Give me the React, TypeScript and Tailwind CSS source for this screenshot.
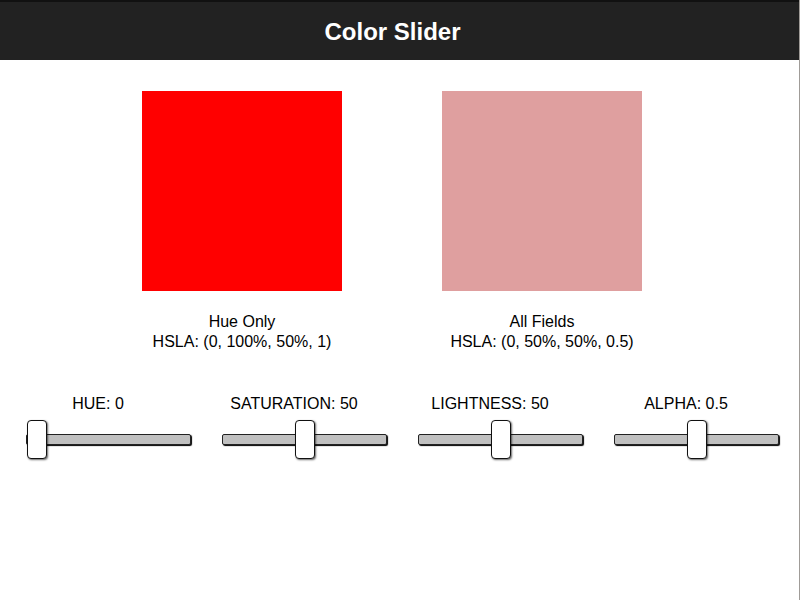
import { useState } from 'react';

type Field = { key: 'h' | 's' | 'l' | 'a'; label: string; max: number };

const fields: Field[] = [
  { key: 'h', label: 'HUE', max: 360 },
  { key: 's', label: 'SATURATION', max: 100 },
  { key: 'l', label: 'LIGHTNESS', max: 100 },
  { key: 'a', label: 'ALPHA', max: 1 },
];

const Slider = ({ value, max }: { value: number; max: number }) => {
  const left = 1 + (value / max) * 144;
  return (
    <div className="relative ml-[26px] w-[165px] h-[40px] pt-[14px]">
      <div className="h-[11px] bg-[#c0c0c0] border border-[#222] rounded-[2px] shadow-[1px_1px_1px_#000]" />
      <div
        className="absolute top-0 w-[20px] h-[39px] bg-white border border-[#111] rounded-[4px] shadow-[1px_1px_2px_rgba(0,0,0,0.6)]"
        style={{ left }}
      />
    </div>
  );
};

const App = () => {
  const [color] = useState({ h: 0, s: 50, l: 50, a: 0.5 });

  return (
    <div className="min-h-screen bg-white border-r border-[#a09c98] font-['Liberation_Sans',Arial,sans-serif] text-black">
      <div className="h-[60px] bg-[#222] border-t-2 border-[#111] flex items-center justify-center pr-[14px] pt-[2px]">
        <h1 className="text-white text-[24px] font-bold">Color Slider</h1>
      </div>

      <div className="w-[784px]">
        <div className="flex justify-center gap-[100px] pt-[31px]">
          <div className="w-[200px] flex flex-col items-center">
            <div className="w-[200px] h-[200px]" style={{ backgroundColor: `hsla(${color.h}, 100%, 50%, 1)` }} />
            <div className="mt-[21px] text-[16px] leading-[20px] text-center whitespace-nowrap">
              <div>Hue Only</div>
              <div>HSLA: ({color.h}, 100%, 50%, 1)</div>
            </div>
          </div>
          <div className="w-[200px] flex flex-col items-center">
            <div
              className="w-[200px] h-[200px]"
              style={{ backgroundColor: `hsla(${color.h}, ${color.s}%, ${color.l}%, ${color.a})` }}
            />
            <div className="mt-[21px] text-[16px] leading-[20px] text-center whitespace-nowrap">
              <div>All Fields</div>
              <div>
                HSLA: ({color.h}, {color.s}%, {color.l}%, {color.a})
              </div>
            </div>
          </div>
        </div>

        <div className="grid grid-cols-4 mt-[42px]">
          {fields.map((f) => (
            <div key={f.key}>
              <div className="text-[16px] leading-[20px] text-center">
                {f.label}: {color[f.key]}
              </div>
              <div className="mt-[6px]">
                <Slider value={color[f.key]} max={f.max} />
              </div>
            </div>
          ))}
        </div>
      </div>
    </div>
  );
};

export default App;
